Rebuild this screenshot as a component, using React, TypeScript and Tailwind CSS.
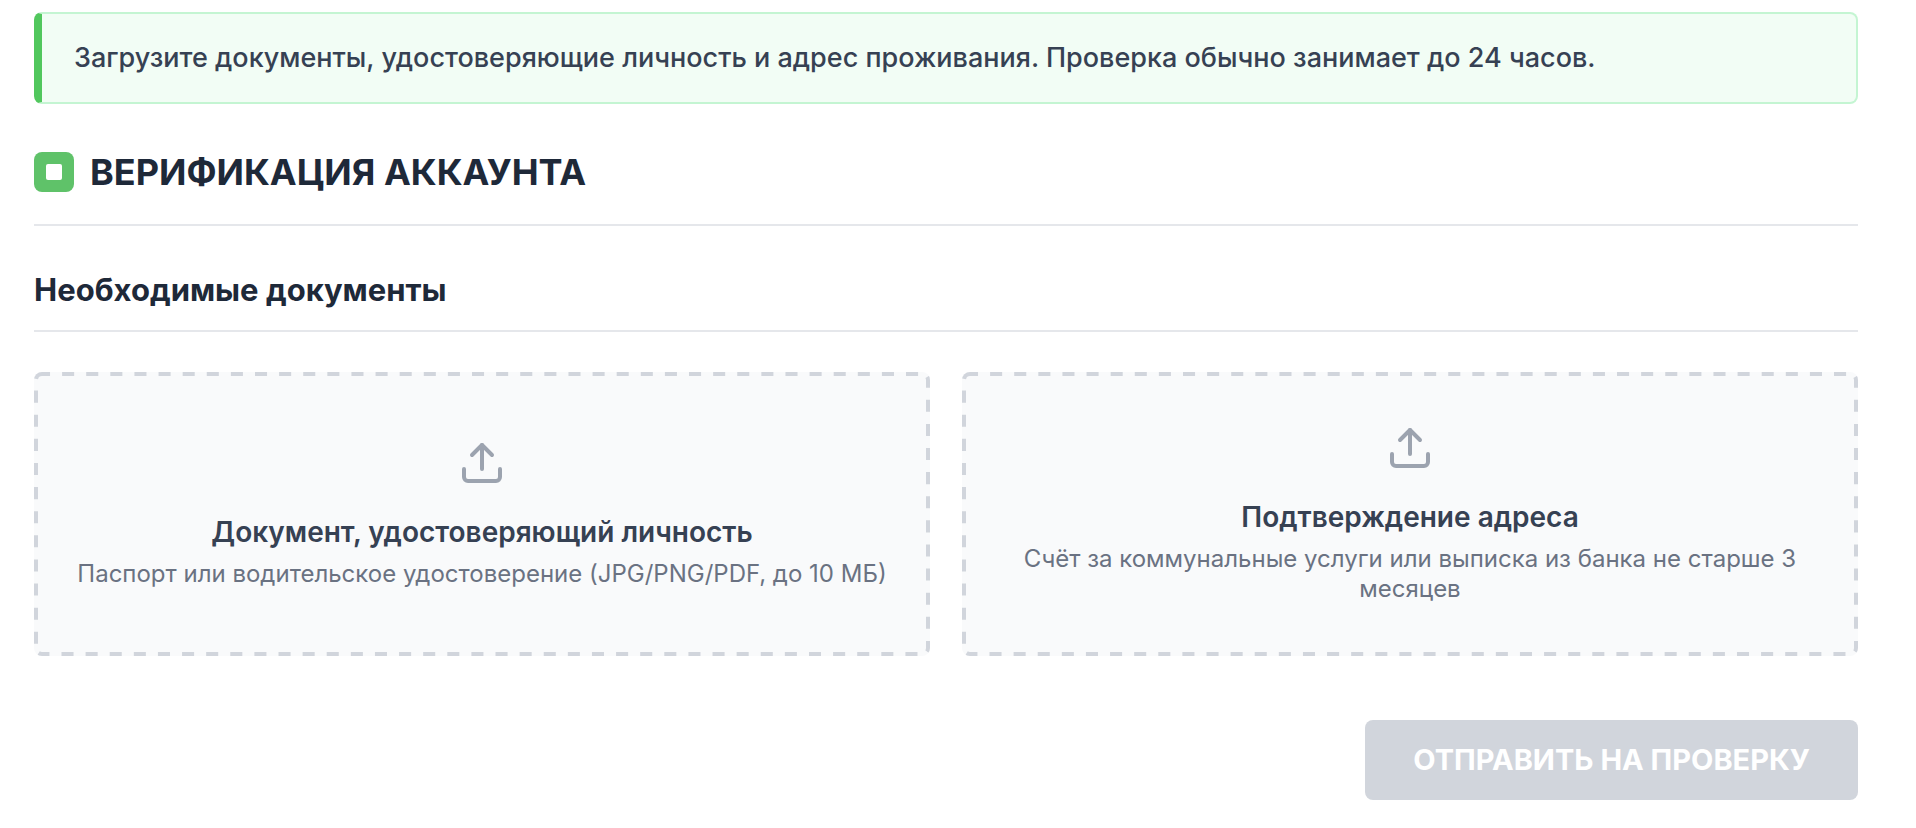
import { useState } from "react";
import { Upload } from "lucide-react";

interface DocumentSlot {
  id: string;
  title: string;
  description: string;
}

const DOCUMENTS: DocumentSlot[] = [
  {
    id: "identity",
    title: "Документ, удостоверяющий личность",
    description: "Паспорт или водительское удостоверение (JPG/PNG/PDF, до 10 МБ)",
  },
  {
    id: "address",
    title: "Подтверждение адреса",
    description: "Счёт за коммунальные услуги или выписка из банка не старше 3 месяцев",
  },
];

// Long even dashes; the outer half of the stroke is clipped by the card
function DashedOutline() {
  return (
    <svg className="pointer-events-none absolute inset-0 size-full" aria-hidden="true">
      <rect
        width="100%"
        height="100%"
        rx="8"
        pathLength="2335"
        strokeWidth="8"
        strokeDasharray="12 12"
        strokeDashoffset="4"
        className="fill-none stroke-gray-300"
      />
    </svg>
  );
}

export default function App() {
  const [files, setFiles] = useState<Record<string, File | undefined>>({});

  const isReady = DOCUMENTS.every((doc) => files[doc.id]);

  return (
    <main className="bg-white pt-3 pr-[58px] pb-7 pl-[34px] font-['Inter',sans-serif] text-gray-800">
      <div className="rounded-lg border-2 border-l-8 border-[#c4f5d2] border-l-[#51c75d] bg-[#f2fdf5] px-8 py-6 text-[27px] leading-10 font-medium text-gray-700">
        Загрузите документы, удостоверяющие личность и адрес проживания. Проверка обычно занимает до 24 часов.
      </div>

      <div className="mt-12 flex items-center gap-4 border-b-2 border-gray-200 pb-8">
        <span className="flex size-10 items-center justify-center rounded-lg bg-[#5fc269]">
          <span className="size-4 rounded-xs bg-white" />
        </span>
        <h1 className="text-4xl font-bold">ВЕРИФИКАЦИЯ АККАУНТА</h1>
      </div>

      <form onSubmit={(e) => e.preventDefault()}>
        <h2 className="mt-11 border-b-2 border-gray-200 pb-5 text-[31px] leading-10 font-bold">
          Необходимые документы
        </h2>

        <div className="mt-10 grid grid-cols-2 gap-8">
          {DOCUMENTS.map((doc) => (
            <label
              key={doc.id}
              className="relative flex cursor-pointer flex-col items-center justify-center overflow-hidden rounded-lg bg-gray-50 px-9 py-[52px] text-center"
            >
              <DashedOutline />
              <input
                type="file"
                className="sr-only"
                onChange={(e) => setFiles({ ...files, [doc.id]: e.target.files?.[0] })}
              />
              <Upload className="size-12 text-[#9ca3af]" />
              <span className="mt-6 text-[28px] leading-[42px] font-semibold text-gray-700">
                {doc.title}
              </span>
              <span className="mt-1.5 text-2xl leading-[30px] text-gray-500">
                {doc.description}
              </span>
            </label>
          ))}
        </div>

        <div className="mt-16 flex justify-end">
          <button
            type="submit"
            disabled={!isReady}
            className="h-20 rounded-lg bg-green-600 px-12 text-[29px] font-bold text-white disabled:bg-gray-300"
          >
            ОТПРАВИТЬ НА ПРОВЕРКУ
          </button>
        </div>
      </form>
    </main>
  );
}
